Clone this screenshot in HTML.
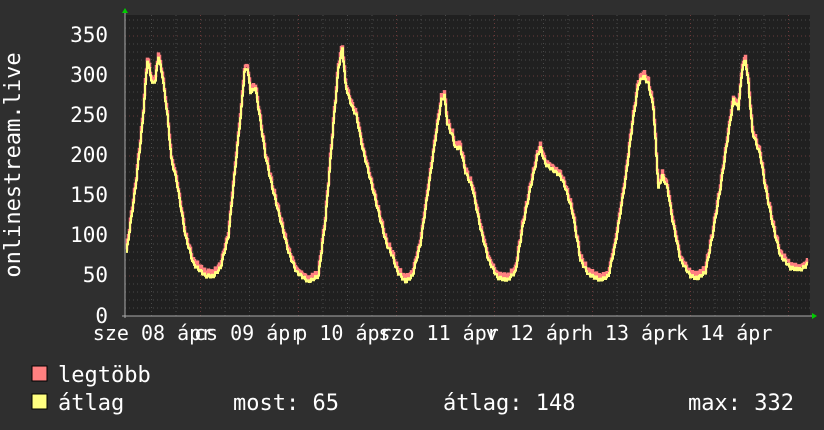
<!DOCTYPE html>
<html><head><meta charset="utf-8"><style>
html,body{margin:0;padding:0;background:#2f2f2f;width:824px;height:430px;overflow:hidden}
svg text{font-family:"DejaVu Sans Mono","Liberation Mono",monospace;fill:#fff}
</style></head><body>
<svg id="s" width="824" height="430" xmlns="http://www.w3.org/2000/svg">
<rect width="824" height="430" fill="#2f2f2f"/>
<rect x="125" y="15" width="685" height="301" fill="#202020"/>
<g id="grid"></g>
<g id="data"></g>
<line x1="125" y1="12" x2="125" y2="318" stroke="#aaa" stroke-width="1"/>
<line x1="122" y1="316" x2="812" y2="316" stroke="#aaa" stroke-width="1"/>
<polygon points="122,13 128,13 125,8" fill="#0c0"/>
<polygon points="812,313 812,319 817,316" fill="#0c0"/>
<g font-size="21" text-anchor="end">
<text x="108" y="42">350</text><text x="108" y="82">300</text><text x="108" y="122">250</text>
<text x="108" y="162">200</text><text x="108" y="202">150</text><text x="108" y="242">100</text>
<text x="108" y="282">50</text><text x="108" y="323">0</text>
</g>
<text transform="translate(20,165) rotate(-90)" font-size="22" text-anchor="middle">onlinestream.live</text>
<g font-size="20" id="xl" text-anchor="middle"></g>
<rect x="32" y="366" width="15" height="15" fill="#ff8080" stroke="#000"/>
<rect x="32" y="394" width="15" height="15" fill="#ffff80" stroke="#000"/>
<g font-size="22">
<text x="58" y="382">legtöbb</text>
<text x="58" y="410">átlag</text>
<text x="233" y="410">most: 65</text>
<text x="443" y="410">átlag: 148</text>
<text x="688" y="410">max: 332</text>
</g>
</svg>
<script>
var NS="http://www.w3.org/2000/svg";
function el(n,a,p){var e=document.createElementNS(NS,n);for(var k in a)e.setAttribute(k,a[k]);p.appendChild(e);return e;}
var g=document.getElementById("grid");
function Y(v){return 316-v*0.8;}
for(var v=10;v<=370;v+=10){var y=Y(v);if(y<15)break;el("line",{x1:125,x2:810,y1:y,y2:y,stroke:v%50==0?"#6a3a3a":"#4a4a4a","stroke-dasharray":"1,3"},g);}
for(var x=151.5;x<810;x+=24.5){var maj=Math.abs(((x-200)/98)-Math.round((x-200)/98))<0.05;el("line",{x1:x,x2:x,y1:15,y2:316,stroke:maj?"#6a3a3a":"#4a4a4a","stroke-dasharray":"1,3"},g);}
var k=[125,70,135,160,142,240,147,320,152,290,155,295,158,325,162,300,167,250,171,195,176,170,185,100,193,65,205,50,213,50,220,60,228,100,236,200,241,260,244,305,247,310,250,280,255,285,258,260,265,200,272,160,280,120,288,80,296,55,308,43,318,50,325,120,333,240,338,310,342,335,345,290,348,275,352,260,356,250,362,210,370,170,378,130,386,90,392,75,397,55,405,43,412,50,420,90,428,160,436,230,441,270,444,275,447,240,452,225,455,210,460,210,465,180,472,160,480,110,488,70,497,48,507,45,515,55,522,110,530,160,537,200,540,210,545,190,550,185,555,180,560,175,565,160,572,130,580,70,588,52,600,45,608,50,615,90,625,170,632,240,638,290,643,300,648,290,653,260,658,160,662,175,667,160,672,120,680,70,690,50,697,47,705,55,712,100,720,160,727,220,733,270,738,260,742,310,745,320,748,290,752,230,760,200,765,160,773,110,780,75,785,68,790,60,800,58,805,62,807,65];
function val(x){for(var i=0;i<k.length-2;i+=2){if(x<=k[i+2]){var t=(x-k[i])/(k[i+2]-k[i]);return k[i+1]+t*(k[i+3]-k[i+1]);}}return k[k.length-1];}
var pr="",py="";
for(var x=126;x<=807;x+=1){var v=val(x);var n=Math.sin(x*1.7)*2;var a=v+n;var m=a+2+Math.abs(Math.sin(x*0.9))*4;
py+=x+","+Y(a).toFixed(1)+" "+(x+1)+","+Y(a).toFixed(1)+" ";pr+=x+","+Y(m).toFixed(1)+" "+(x+1)+","+Y(m).toFixed(1)+" ";}
var d=document.getElementById("data");
el("polyline",{points:pr,fill:"none",stroke:"#ff8080","stroke-width":2.5},d);
el("polyline",{points:py,fill:"none",stroke:"#ffff80","stroke-width":2},d);
var xl=document.getElementById("xl");
var L=["sze 08 ápr","cs 09 ápr","p 10 ápr","szo 11 ápr","v 12 ápr","h 13 ápr","k 14 ápr"];
for(var i=0;i<7;i++){var t=el("text",{x:(153+95.2*i).toFixed(1),y:340},xl);t.textContent=L[i];}
</script>
</body></html>
